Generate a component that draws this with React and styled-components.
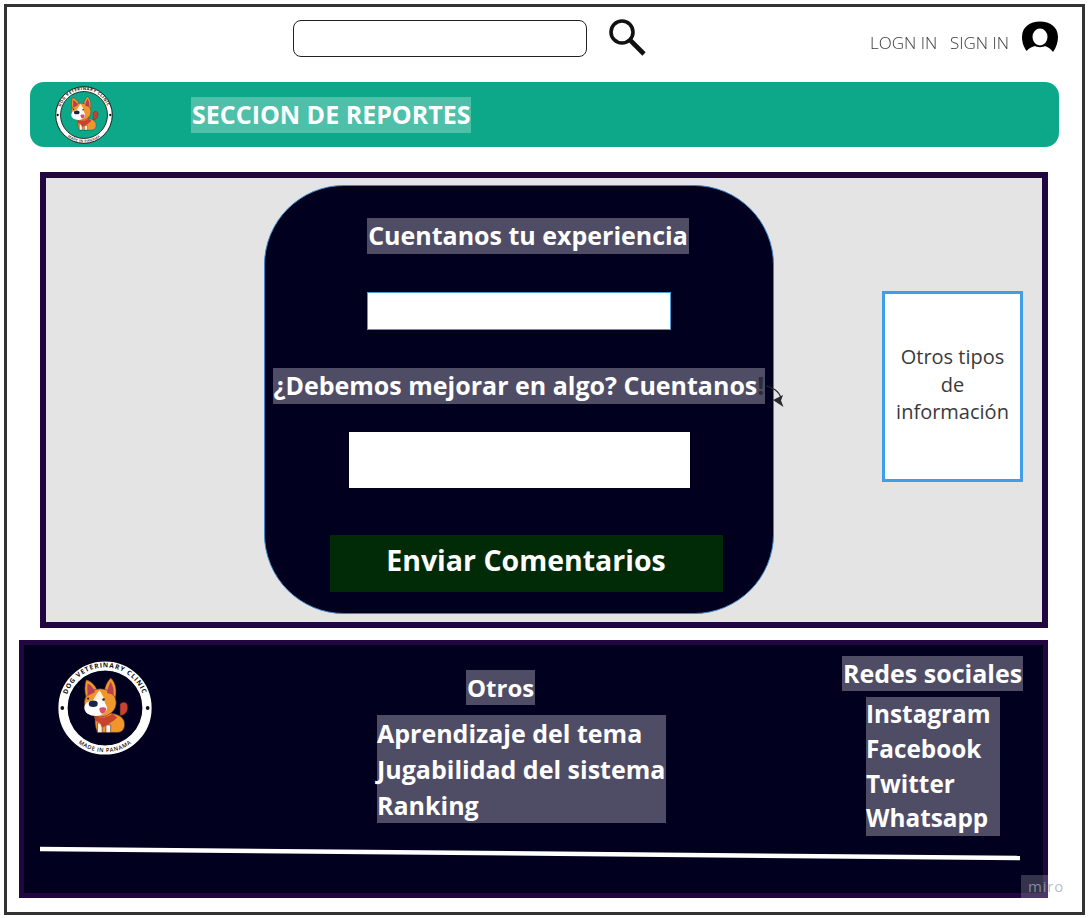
import React from 'react';
import styled, { createGlobalStyle } from 'styled-components';

const GlobalStyle = createGlobalStyle`
  * {
    box-sizing: border-box;
  }

  body {
    margin: 0;
    background: #fff;
    font-family: 'Open Sans', 'Liberation Sans', sans-serif;
  }
`;

const Page = styled.div`
  padding: 4px;
`;

const Frame = styled.div`
  position: relative;
  width: 1081px;
  height: 911px;
  border: 3px solid #333;
  background: #fff;
`;

const Header = styled.header`
  display: flex;
  height: 75px;
  padding: 13px 23px 0 286px;
`;

const SearchInput = styled.input`
  width: 294px;
  height: 37px;
  border: 1.5px solid #222;
  border-radius: 8px;
  background: #fff;
`;

const SearchIcon = styled.svg`
  width: 38px;
  height: 38px;
  margin-left: 21px;
  margin-top: -2px;
`;

const Account = styled.nav`
  display: flex;
  margin-left: auto;
  align-items: flex-start;
`;

const AccountLink = styled.a`
  margin-right: 13px;
  margin-top: 10px;
  color: #3a3a3a;
  font-size: 17px;
  font-weight: 300;
  line-height: 26px;
  will-change: transform;
`;

const Avatar = styled.svg`
  width: 38px;
  height: 36px;
  margin-top: 1px;
  margin-left: -1px;
`;

const Banner = styled.section`
  display: flex;
  align-items: center;
  width: 1029px;
  height: 65px;
  margin-left: 23px;
  padding-left: 25px;
  border-radius: 14px;
  background: #0da88a;
`;

const BannerTitle = styled.h1`
  margin: 0 0 0 78px;
  padding: 0 1px 2px;
  height: 36px;
  background: rgba(255, 255, 255, 0.27);
  color: #fff;
  font-size: 25px;
  font-weight: 700;
  line-height: 34px;
  white-space: nowrap;
`;

const ReportPanel = styled.main`
  display: flex;
  align-items: flex-start;
  width: 1008px;
  height: 456px;
  margin: 25px 0 0 33px;
  padding: 7px 0 0 218px;
  border: 6px solid #21063f;
  background: #e4e4e4;
`;

const FormCard = styled.form`
  position: relative;
  display: flex;
  flex-direction: column;
  align-items: center;
  width: 510px;
  height: 429px;
  padding-top: 32px;
  border: 1px solid #3a85c8;
  border-radius: 80px;
  background: #01001e;
`;

const Label = styled.label`
  height: 36px;
  margin-left: ${p => p.$shift || 0}px;
  padding: 0 1px 2px;
  background: #4f4d66;
  color: #fff;
  font-size: 25px;
  font-weight: 700;
  line-height: 34px;
  white-space: nowrap;
`;

const Faded = styled.span`
  color: #2e2d38;
`;

const Field = styled.div`
  width: ${p => p.$width}px;
  height: ${p => p.$height}px;
  margin-top: ${p => p.$top}px;
  border: ${p => (p.$outlined ? '1px solid #4a9bdc' : 'none')};
  background: #fff;
`;

const SecondLabel = styled(Label)`
  margin-top: 38px;
`;

const SendButton = styled.button`
  width: 393px;
  height: 57px;
  margin: 47px 0 0 14px;
  padding: 0 0 7px 0;
  border: none;
  background: #012b06;
  color: #fff;
  font-family: inherit;
  font-size: 28.5px;
  font-weight: 700;
`;

const Connector = styled.svg`
  position: absolute;
  top: 200px;
  left: 501px;
  width: 20px;
  height: 22px;
  overflow: visible;
`;

const SidePanel = styled.aside`
  display: flex;
  align-items: center;
  justify-content: center;
  width: 141px;
  height: 191px;
  margin: 106px 0 0 108px;
  padding: 0 8px 4px;
  border: 3px solid #3f9ee8;
  background: #fff;
  color: #3a3a3a;
  font-size: 20px;
  line-height: 27.5px;
  text-align: center;
`;

const Footer = styled.footer`
  width: 1029px;
  height: 258px;
  margin: 12px 0 0 12px;
  border: 5px solid #21063f;
  background: #01001e;
`;

const FooterRow = styled.div`
  display: flex;
  align-items: flex-start;
  height: 192px;
`;

const FooterLogo = styled.div`
  width: 94px;
  margin: 16px 225px 0 34px;
`;

const OthersColumn = styled.div`
  display: flex;
  flex-direction: column;
  align-items: flex-start;
  width: 289px;
  margin-right: 176px;
  padding-top: 25px;
`;

const SocialColumn = styled.div`
  display: flex;
  flex-direction: column;
  align-items: flex-start;
  width: 181px;
  padding-top: 11px;
`;

const FooterTitle = styled.h2`
  margin: 0 0 0 ${p => p.$shift || 0}px;
  padding: 0 1px;
  background: #4f4d66;
  color: #fff;
  font-size: ${p => p.$size}px;
  font-weight: 700;
  line-height: 35px;
  white-space: nowrap;
`;

const LinkList = styled.ul`
  width: ${p => p.$width}px;
  margin: ${p => p.$top}px 0 0 ${p => p.$shift || 0}px;
  padding: 0 0 ${p => p.$bottom || 0}px;
  background: #4f4d66;
  list-style: none;
`;

const LinkItem = styled.li`
  color: #fff;
  font-size: ${p => p.$size}px;
  font-weight: 700;
  line-height: ${p => p.$line}px;
  white-space: nowrap;
`;

const FooterRule = styled.svg`
  display: block;
  width: 980px;
  height: 16px;
  margin: 9px 0 0 16px;
`;

const MiroMark = styled.div`
  position: absolute;
  top: 868px;
  left: 1014px;
  width: 27px;
  height: 23px;
  padding-left: 7px;
  background: rgba(255, 255, 255, 0.2);
  color: rgba(165, 165, 185, 0.75);
  font-size: 15px;
  letter-spacing: 0.8px;
  line-height: 23px;
  white-space: nowrap;
`;

const LogoSvg = styled.svg`
  display: block;
`;

const Logo = ({ size, center, outline, id }) => (
  <LogoSvg width={size} height={size} viewBox="0 0 100 100">
    <defs>
      <path id={`${id}-top`} d="M 8.4 58 A 42.5 42.5 0 1 1 91.6 58" />
      <path id={`${id}-bottom`} d="M 3 50 A 47 47 0 0 0 97 50" />
    </defs>
    <circle cx="50" cy="50" r="48.8" fill="#fff" stroke={outline} strokeWidth="1.6" />
    <circle cx="50" cy="50" r="40.5" fill={center} stroke={outline} strokeWidth="1.4" />
    <circle cx="4.6" cy="50" r="2" fill="#111" />
    <circle cx="95.4" cy="50" r="2" fill="#111" />
    <text fontFamily="'Open Sans', sans-serif" fontSize="7" fontWeight="700" fill="#111" letterSpacing="0.95">
      <textPath href={`#${id}-top`} startOffset="50%" textAnchor="middle">DOG VETERINARY CLINIC</textPath>
    </text>
    <text fontFamily="'Open Sans', sans-serif" fontSize="6" fontWeight="600" fill="#111" letterSpacing="0.6">
      <textPath href={`#${id}-bottom`} startOffset="50%" textAnchor="middle">MADE IN PANAMA</textPath>
    </text>
    {/* corgi */}
    <g stroke="#3a2438" strokeWidth="0.6">
      <path d="M66 46 C69 42 74 44 74 48 C75 54 71 58 66 58 Z" fill="#c9412f" />
      <path d="M40 58 C50 54 65 54 70 63 C72 68 71 76 63 76 L42 76 C39 70 39 63 40 58 Z" fill="#f0962c" />
      <path d="M42 66 L42 76 L47 76 L47 66 Z M51 68 L51 76 L56 76 L56 68 Z" fill="#fff2dc" />
      <path d="M30 40 C28 32 28 26 30 20 C37 22 41 28 43 34 Z" fill="#f0962c" />
      <path d="M49 33 C50 27 52 22 56 18 C61 22 63 30 61 40 Z" fill="#f0962c" />
      <ellipse cx="45" cy="44.5" rx="17" ry="15" fill="#f0962c" />
    </g>
    <path d="M32 37 C31 32 31 28 31.5 24 C36 26 38 30 39.5 33 Z" fill="#b73f55" />
    <path d="M52 34 C53 29 54 26 56 22 C59 27 59.5 31 59 36 Z" fill="#b73f55" />
    <path d="M44 31 C40 36 39 39 37 42 L50 46 C50 40 47 35 44 31 Z" fill="#fff2dc" />
    <ellipse cx="40" cy="50" rx="12" ry="8.6" fill="#fff" />
    <ellipse cx="37.5" cy="45.5" rx="4.8" ry="3.4" fill="#1d2547" />
    <circle cx="32" cy="40" r="1.2" fill="#1d2547" />
    <circle cx="48.5" cy="41" r="1.4" fill="#1d2547" />
    <path d="M44 50 C46 49 50 49 51 50 C51.5 54 49 56.5 47 56 C45 55.5 44 53 44 50 Z" fill="#d94f6e" />
    <path d="M38 58 C45 62 53 60 58 56 L63 60 C58 65 52 68 47 71 L44 65 L40 64 Z" fill="#c9412f" />
  </LogoSvg>
);

const App = () => (
  <Page>
    <GlobalStyle />
    <Frame>
      <Header>
        <SearchInput type="text" />
        <SearchIcon viewBox="0 0 38 38">
          <circle cx="14" cy="14" r="11" fill="none" stroke="#111" strokeWidth="3.6" />
          <path d="M22 22 L36 36" stroke="#111" strokeWidth="4.6" fill="none" />
        </SearchIcon>
        <Account>
          <AccountLink>LOGN IN</AccountLink>
          <AccountLink>SIGN IN</AccountLink>
          <Avatar viewBox="0 0 38 36">
            <path d="M5.7 30 C2 25 1 20 1 16 C1 6 9 0.5 19 0.5 C29 0.5 37 6 37 16 C37 21 35 27 32 31 C30 28 27 26 24 25 C22 26.5 16 26.5 14 25 C11 26 8 27 5.7 30 Z" fill="#000" />
            <ellipse cx="19" cy="16" rx="7.5" ry="8.5" fill="#fff" />
          </Avatar>
        </Account>
      </Header>

      <Banner>
        <Logo id="banner-logo" size={58} center="#0da88a" outline="#111" />
        <BannerTitle>SECCION DE REPORTES</BannerTitle>
      </Banner>

      <ReportPanel>
        <FormCard>
          <Label $shift={18}>Cuentanos tu experiencia</Label>
          <Field $width={304} $height={38} $top={38} $outlined />
          <SecondLabel>
            ¿Debemos mejorar en algo? Cuentanos<Faded>!</Faded>
          </SecondLabel>
          <Field $width={341} $height={56} $top={28} />
          <SendButton type="button">Enviar Comentarios</SendButton>
          <Connector viewBox="0 0 20 22">
            <path d="M0 0 C6 1 13 5 15 12" fill="none" stroke="#2a2a2a" strokeWidth="1.2" />
            <path d="M7 14 L17 9 L15 14.5 L17.5 21 Z" fill="#2a2a2a" />
          </Connector>
        </FormCard>
        <SidePanel>Otros tipos de información</SidePanel>
      </ReportPanel>

      <Footer>
        <FooterRow>
          <FooterLogo>
            <Logo id="footer-logo" size={94} center="#01001e" outline="#fff" />
          </FooterLogo>
          <OthersColumn>
            <FooterTitle $shift={89} $size={24}>Otros</FooterTitle>
            <LinkList $width={289} $top={10}>
              <LinkItem $size={25} $line={36}>Aprendizaje del tema</LinkItem>
              <LinkItem $size={25} $line={36}>Jugabilidad del sistema</LinkItem>
              <LinkItem $size={25} $line={36}>Ranking</LinkItem>
            </LinkList>
          </OthersColumn>
          <SocialColumn>
            <FooterTitle $size={25}>Redes sociales</FooterTitle>
            <LinkList $width={134} $top={6} $shift={24}>
              <LinkItem $size={24.3} $line={34.75}>Instagram</LinkItem>
              <LinkItem $size={24.3} $line={34.75}>Facebook</LinkItem>
              <LinkItem $size={24.3} $line={34.75}>Twitter</LinkItem>
              <LinkItem $size={24.3} $line={34.75}>Whatsapp</LinkItem>
            </LinkList>
          </SocialColumn>
        </FooterRow>
        <FooterRule viewBox="0 0 980 16" preserveAspectRatio="none">
          <path d="M0 3 L980 12" stroke="#fff" strokeWidth="4.5" fill="none" />
        </FooterRule>
      </Footer>

      <MiroMark>miro</MiroMark>
    </Frame>
  </Page>
);

export default App;
